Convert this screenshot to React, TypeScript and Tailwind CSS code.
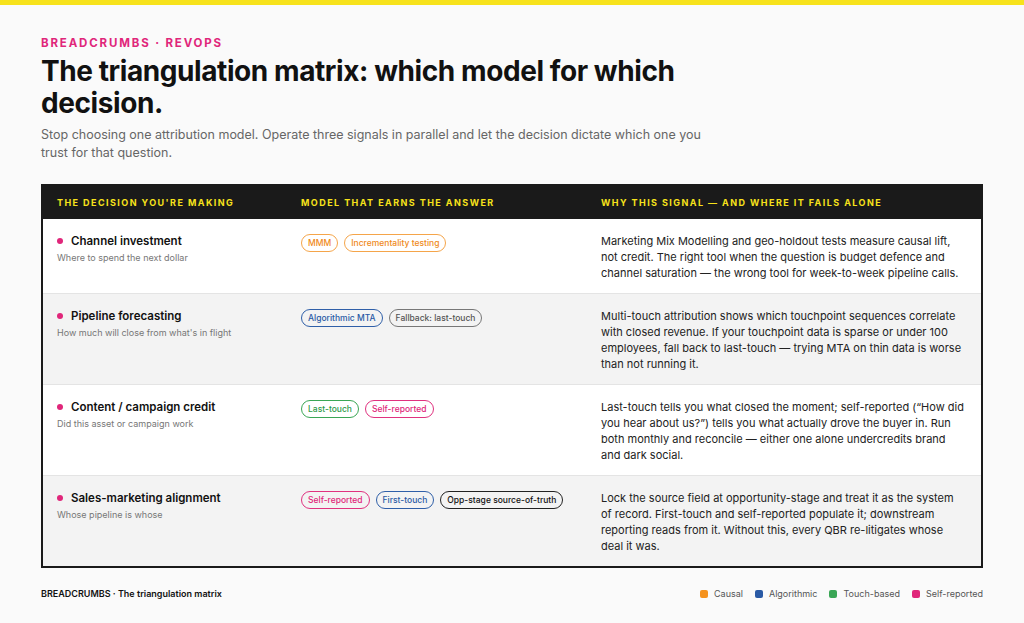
const tones: Record<string, string> = {
  orange: "border-[#f5a54a] text-[#ef8a1a]",
  blue: "border-[#2f5fa8] text-[#2a5aa5]",
  green: "border-[#3aa655] text-[#2f9a4a]",
  pink: "border-[#e0327f] text-[#e0267a]",
  gray: "border-[#777] text-[#555]",
  dark: "border-[#222] text-[#111]",
};

const rows = [
  {
    title: "Channel investment",
    sub: "Where to spend the next dollar",
    tags: [["MMM", "orange"], ["Incrementality testing", "orange"]],
    why: "Marketing Mix Modelling and geo-holdout tests measure causal lift, not credit. The right tool when the question is budget defence and channel saturation — the wrong tool for week-to-week pipeline calls.",
    bg: "bg-white",
  },
  {
    title: "Pipeline forecasting",
    sub: "How much will close from what's in flight",
    tags: [["Algorithmic MTA", "blue"], ["Fallback: last-touch", "gray"]],
    why: "Multi-touch attribution shows which touchpoint sequences correlate with closed revenue. If your touchpoint data is sparse or under 100 employees, fall back to last-touch — trying MTA on thin data is worse than not running it.",
    bg: "bg-[#f3f3f3]",
  },
  {
    title: "Content / campaign credit",
    sub: "Did this asset or campaign work",
    tags: [["Last-touch", "green"], ["Self-reported", "pink"]],
    why: "Last-touch tells you what closed the moment; self-reported (\u201cHow did you hear about us?\u201d) tells you what actually drove the buyer in. Run both monthly and reconcile — either one alone undercredits brand and dark social.",
    bg: "bg-white",
  },
  {
    title: "Sales-marketing alignment",
    sub: "Whose pipeline is whose",
    tags: [["Self-reported", "pink"], ["First-touch", "blue"], ["Opp-stage source-of-truth", "dark"]],
    why: "Lock the source field at opportunity-stage and treat it as the system of record. First-touch and self-reported populate it; downstream reporting reads from it. Without this, every QBR re-litigates whose deal it was.",
    bg: "bg-[#f3f3f3]",
  },
];

export default function App() {
  return (
    <div className="min-h-[623px] w-[1024px] bg-[#fafafa] text-[#111] font-[Inter,sans-serif]">
      <div className="h-[5px] bg-[#f7e21b]" />
      <div className="px-[41px] pt-[30px]">
        <div className="text-[11.5px] font-bold leading-[16px] tracking-[0.16em] text-[#e0267a]">BREADCRUMBS · REVOPS</div>
        <h1 className="mt-[4px] w-[700px] text-[28px] font-bold leading-[32px] tracking-[-0.015em]">
          The triangulation matrix: which model for which decision.
        </h1>
        <p className="mt-[7px] w-[680px] text-[12.5px] leading-[18px] text-[#666]">
          Stop choosing one attribution model. Operate three signals in parallel and let the decision dictate which one you trust for that question.
        </p>
        <div className="mt-[22px] border-2 border-[#1a1a1a]">
          <div className="grid grid-cols-[258px_300px_1fr] h-[33px] items-center bg-[#1a1a1a] text-[9px] font-bold tracking-[0.16em] text-[#f7e21b]">
            <div className="pl-[14px]">THE DECISION YOU'RE MAKING</div>
            <div>MODEL THAT EARNS THE ANSWER</div>
            <div>WHY THIS SIGNAL — AND WHERE IT FAILS ALONE</div>
          </div>
          {rows.map((r, i) => (
            <div key={i} className={`grid grid-cols-[258px_300px_1fr] pt-[14px] pb-[12px] ${r.bg} ${i > 0 ? "border-t border-[#e4e4e4]" : ""}`}>
              <div className="pl-[14px]">
                <div className="flex items-center gap-[8px] text-[11.5px] font-semibold leading-[16px]">
                  <span className="h-[6px] w-[6px] rounded-full bg-[#e0267a]" />
                  {r.title}
                </div>
                <div className="mt-[2px] text-[9px] text-[#777]">{r.sub}</div>
              </div>
              <div className="flex items-start gap-[6px] pt-[1px]">
                {r.tags.map(([t, c]) => (
                  <span key={t} className={`rounded-full border px-[6px] py-[2px] text-[8.5px] font-medium leading-[12px] ${tones[c]}`}>{t}</span>
                ))}
              </div>
              <div className="pr-[14px] text-[11px] leading-[16px] text-[#222]">{r.why}</div>
            </div>
          ))}
        </div>
        <div className="mt-[19px] flex items-center justify-between text-[9px]">
          <div className="font-semibold">BREADCRUMBS · The triangulation matrix</div>
          <div className="flex items-center gap-[12px] text-[#555]">
            {[["Causal", "bg-[#f5921e]"], ["Algorithmic", "bg-[#2a5aa5]"], ["Touch-based", "bg-[#3aa655]"], ["Self-reported", "bg-[#e0267a]"]].map(([l, c]) => (
              <span key={l} className="flex items-center gap-[6px]">
                <span className={`h-[8px] w-[8px] rounded-[2px] ${c}`} />
                {l}
              </span>
            ))}
          </div>
        </div>
      </div>
    </div>
  );
}
